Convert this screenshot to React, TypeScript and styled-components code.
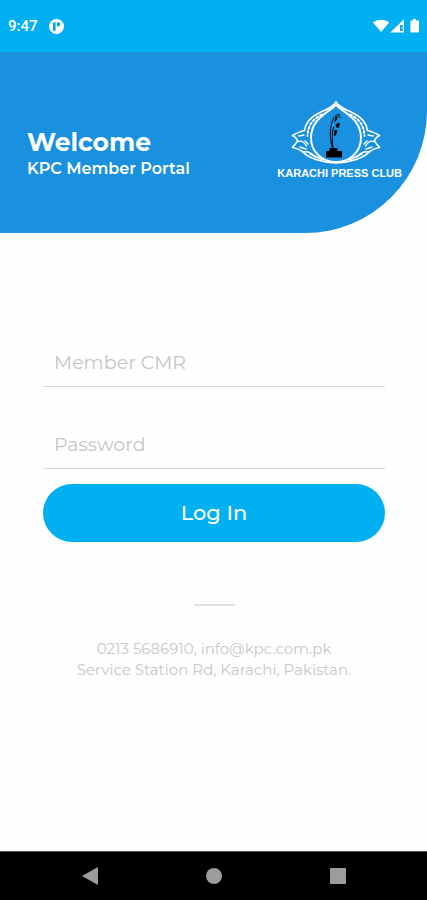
import React from "react";
import styled, { createGlobalStyle } from "styled-components";

const GlobalStyle = createGlobalStyle`
  *, *::before, *::after { box-sizing: border-box; }
  body {
    margin: 0;
    background: #fefefe;
    font-family: Montserrat, Inter, "Open Sans", sans-serif;
  }
`;

const Screen = styled.div`
  min-height: 100vh;
  display: flex;
  flex-direction: column;
`;

const StatusBar = styled.div`
  height: 52px;
  padding: 0 7px 0 8px;
  display: flex;
  align-items: center;
  justify-content: space-between;
  background: #00b0f0;
  color: #fff;
`;

const StatusGroup = styled.div`
  display: flex;
  align-items: center;
  gap: 11px;
`;

const Clock = styled.time`
  font: 500 15px/20px Roboto, sans-serif;
`;

const Header = styled.header`
  height: 181px;
  padding: 0 25px 0 27px;
  display: flex;
  align-items: center;
  justify-content: space-between;
  background: #1991de;
  color: #fff;
  border-bottom-right-radius: 122px;
`;

const Greeting = styled.div`
  padding-top: 20px;
`;

const Title = styled.h1`
  margin: 0;
  font-size: 25px;
  font-weight: 700;
  line-height: 32px;
`;

const Subtitle = styled.p`
  margin: 0;
  font-size: 16px;
  font-weight: 600;
  line-height: 22px;
`;

const Brand = styled.div`
  padding-bottom: 4px;
  display: flex;
  flex-direction: column;
`;

const EmblemArt = styled.svg`
  display: block;
  margin-left: 14px;
`;

const BrandName = styled.span`
  font: 700 11px/16px "Liberation Sans", Arial, sans-serif;
  white-space: nowrap;
`;

const Main = styled.main`
  flex: 1;
  padding: 107px 42px 0 43px;
  display: flex;
  flex-direction: column;
`;

const Form = styled.form`
  display: flex;
  flex-direction: column;
`;

const Field = styled.input`
  width: 100%;
  height: 47px;
  margin-bottom: 35px;
  padding: 0 11px 2px;
  border: 0;
  border-bottom: 1px solid #d6d6d6;
  border-radius: 0;
  outline: 0;
  background: transparent;
  color: #555;
  font: 400 19px/24px Montserrat, Inter, sans-serif;

  &::placeholder {
    color: #c6c6c6;
    opacity: 1;
  }
  &:focus { border-color: #00b0f0; }
  &:last-of-type { margin-bottom: 15px; }
`;

const LoginButton = styled.button`
  height: 58px;
  border: 0;
  border-radius: 29px;
  background: #00b0f0;
  color: #fff;
  font: 500 21px/26px Montserrat, Inter, sans-serif;
  cursor: pointer;
`;

const Divider = styled.hr`
  width: 41px;
  height: 2px;
  margin: 62px auto 32px;
  border: 0;
  background: #e0e0e0;
`;

const Contact = styled.address`
  margin: 0 -10px;
  color: #c8c8c8;
  font-size: 15px;
  font-style: normal;
  line-height: 21px;
  text-align: center;
`;

const MailLink = styled.a`
  color: inherit;
  text-decoration: none;
`;

const NavBar = styled.nav`
  height: 49px;
  padding: 0 64px 0 65px;
  display: flex;
  align-items: center;
  justify-content: space-between;
  background: #000;
  border-top: 1px solid #555;
`;

const NavButton = styled.button`
  width: 50px;
  height: 40px;
  padding: 0;
  display: grid;
  place-items: center;
  border: 0;
  background: transparent;
  color: #9c9c9c;
  cursor: pointer;
`;

const AppIcon = () => (
  <svg width="15" height="15" viewBox="0 0 15 15" aria-hidden="true">
    <circle cx="7.5" cy="7.5" r="7.5" fill="#fff" />
    <path d="M4 4.600c0-.8.6-1.400 1.400-1.400H6.600V10.800c0 .8-.6 1.400-1.300 1.400S4 11.600 4 10.800Z" fill="#00a7e8" />
    <path d="M8 3.200h1.300a2 2 0 0 1 0 4H8Z" fill="#00a7e8" />
  </svg>
);

const SignalIcons = () => (
  <svg width="47" height="16" viewBox="0 0 47 16" fill="#fff" aria-label="Wi-Fi, signal and battery">
    <path d="M0 4.400C4.600.9 11.600.9 16.200 4.400L8.100 14Z" />
    <path d="M17.200 14.500 31 1.200V14.500Z" />
    <path d="M27 7.100h2.800v6H27Z" fill="#00a7e8" />
    <path d="M28 10h1.400" fill="none" stroke="#fff" strokeWidth=".8" />
    <path d="M40 1h3v1.400h2c.7 0 1 .4 1 1v10.200c0 .6-.4 1-1 1h-6.600c-.6 0-1-.4-1-1V3.400c0-.6.4-1 1-1H40Z" />
  </svg>
);

const Wing = () => (
  <g fill="none" stroke="#fff" strokeLinecap="round" strokeLinejoin="round">
    <path
      strokeWidth="1.700"
      d="M45 1.200C40.500 7.200 34 9 27 12.500C19 16.500 14.500 21.500 13.500 29.500C9.500 30 6 32 1.500 34.500C4.500 36 6 38 6.500 40.500C4.500 42.500 3 44.500 1.500 46.500C6 47.500 9 48.500 12 51C18 57.500 31 61.500 45 61.800"
    />
    <path strokeWidth="1.300" d="M6.500 40.500C10 39.500 13.500 41.500 15.500 45M12 51C17 50 21 52.500 24 56" />
    <path strokeWidth="2" strokeDasharray="2 2.500" d="M31 13.500C22 18 17 24 16.500 35" />
    <path strokeWidth="1.400" d="M8 35l5-1M9 46l6 2M14 40l3 3M19 53L32 59" />
  </g>
);

const Emblem = () => (
  <EmblemArt width="90" height="64" viewBox="0 0 90 64" aria-hidden="true">
    <Wing />
    <g transform="matrix(-1 0 0 1 90 0)">
      <Wing />
    </g>
    <path
      d="M45 3.500C38.500 11.500 20 17 20 37C20 51.500 32 61 45 61S70 51.500 70 37C70 17 51.500 11.500 45 3.500Z"
      fill="#1991de"
      stroke="#fff"
      strokeWidth="2"
    />
    <path d="M38.500 47h8V50H51v6.500H35V50h3.500Z" fill="#000" />
    <path
      d="M41.500 47C38.300 37 38.500 25 42.500 17.500C44.500 14 47 13 48.500 13.500C47 15 47.300 16.500 49.500 16M42.500 26C40.500 34 41 40 42 47"
      fill="none"
      stroke="#000"
      strokeWidth="1"
    />
    <path
      d="M44 17l2.500-2.500-.5 4-2.500 3ZM44.500 24l3-2.500 1.500 1.500-1.500 4-2.500-1ZM43.500 29l3 .5-1.500 4.500-2 1Z"
      fill="#000"
    />
  </EmblemArt>
);

export default function App() {
  return (
    <>
      <GlobalStyle />
      <Screen>
        <StatusBar>
          <StatusGroup>
            <Clock>9:47</Clock>
            <AppIcon />
          </StatusGroup>
          <SignalIcons />
        </StatusBar>
        <Header>
          <Greeting>
            <Title>Welcome</Title>
            <Subtitle>KPC Member Portal</Subtitle>
          </Greeting>
          <Brand>
            <Emblem />
            <BrandName>KARACHI PRESS CLUB</BrandName>
          </Brand>
        </Header>
        <Main>
          <Form onSubmit={(e) => e.preventDefault()}>
            <Field type="text" name="cmr" placeholder="Member CMR" aria-label="Member CMR" />
            <Field type="password" name="password" placeholder="Password" aria-label="Password" />
            <LoginButton type="submit">Log In</LoginButton>
          </Form>
          <Divider />
          <Contact>
            0213 5686910, <MailLink href="mailto:info@kpc.com.pk">info@kpc.com.pk</MailLink>
            <br />
            Service Station Rd, Karachi, Pakistan.
          </Contact>
        </Main>
        <NavBar aria-label="System navigation">
          <NavButton type="button" aria-label="Back">
            <svg width="16" height="18" viewBox="0 0 16 18" fill="currentColor">
              <path d="M0 9 16 0v18Z" />
            </svg>
          </NavButton>
          <NavButton type="button" aria-label="Home">
            <svg width="16" height="16" viewBox="0 0 16 16" fill="currentColor">
              <circle cx="8" cy="8" r="8" />
            </svg>
          </NavButton>
          <NavButton type="button" aria-label="Recent apps">
            <svg width="16" height="16" viewBox="0 0 16 16" fill="currentColor">
              <rect width="16" height="16" rx="1" />
            </svg>
          </NavButton>
        </NavBar>
      </Screen>
    </>
  );
}
